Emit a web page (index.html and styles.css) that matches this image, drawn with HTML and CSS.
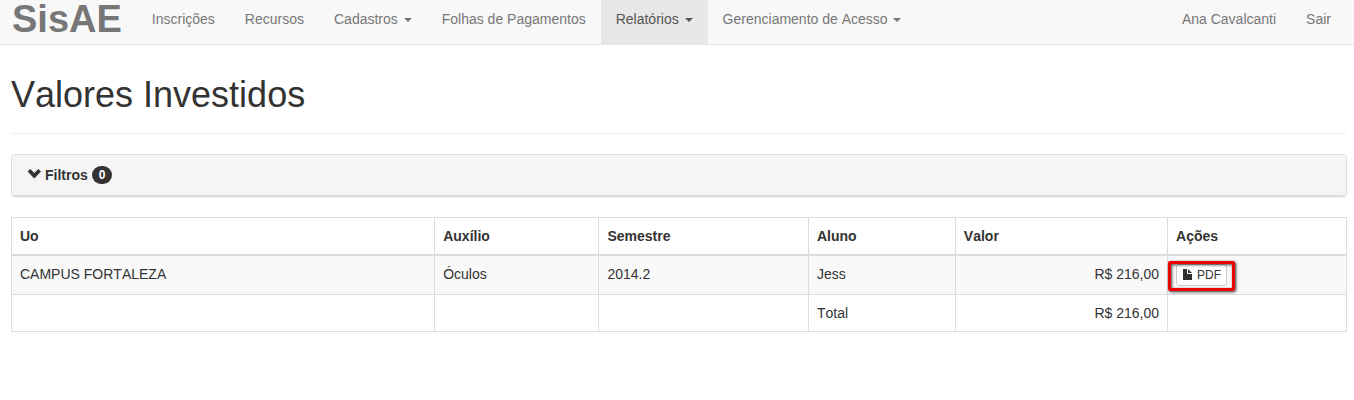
FILE: index.html
```html
<!DOCTYPE html>
<html lang="pt-BR">
<head>
  <meta charset="UTF-8" />
  <title>SisAE - Valores Investidos</title>
  <meta name="viewport" content="width=device-width, initial-scale=1.0" />
  <link rel="stylesheet" href="styles.css">
</head>
<body>
  <nav class="navbar">
    <a class="navbar-brand" href="#">SisAE</a>
    <ul class="nav">
      <li><a href="#">Inscrições</a></li>
      <li><a href="#">Recursos</a></li>
      <li><a href="#">Cadastros <span class="caret"></span></a></li>
      <li><a href="#">Folhas de Pagamentos</a></li>
      <li class="active"><a href="#">Relatórios <span class="caret"></span></a></li>
      <li><a href="#">Gerenciamento de Acesso <span class="caret"></span></a></li>
    </ul>
    <ul class="nav nav-right">
      <li><a href="#">Ana Cavalcanti</a></li>
      <li><a href="#">Sair</a></li>
    </ul>
  </nav>

  <main class="container">
    <div class="page-header">
      <h1>Valores Investidos</h1>
    </div>

    <!-- Filtros -->
    <div class="panel">
      <button class="panel-heading" type="button">
        <svg width="14" height="14" viewBox="0 0 14 14"><path d="M3.2 1 L7.3 5 L11.4 1 L14 3.6 L7.3 10.4 L0.6 3.6 Z" fill="#333"/></svg>
        <span>Filtros</span>
        <span class="badge">0</span>
      </button>
    </div>

    <!-- Resultado -->
    <table class="table">
      <thead>
        <tr>
          <th class="col-uo">Uo</th>
          <th class="col-auxilio">Auxílio</th>
          <th class="col-semestre">Semestre</th>
          <th class="col-aluno">Aluno</th>
          <th class="col-valor">Valor</th>
          <th>Ações</th>
        </tr>
      </thead>
      <tbody>
        <tr class="striped">
          <td>CAMPUS FORTALEZA</td>
          <td>Óculos</td>
          <td>2014.2</td>
          <td>Jess</td>
          <td class="text-right">R$ 216,00</td>
          <td>
            <div class="actions">
              <a class="btn" href="#">
                <svg width="12" height="12" viewBox="0 0 12 12"><path d="M1 0 H5 V5 H10 V11 H1 Z M6 0 L10 4 H6 Z" fill="#333"/></svg>
                PDF
              </a>
              <span class="highlight"></span>
            </div>
          </td>
        </tr>
        <tr>
          <td></td>
          <td></td>
          <td></td>
          <td>Total</td>
          <td class="text-right">R$ 216,00</td>
          <td></td>
        </tr>
      </tbody>
    </table>
  </main>
</body>
</html>
```
FILE: styles.css
```css
* {
  box-sizing: border-box;
}
body {
  margin: 0;
  font-family: "Liberation Sans", Arial, sans-serif;
  font-size: 14px;
  line-height: 20px;
  font-kerning: none;
  color: #333;
  background: #fff;
}
a {
  text-decoration: none;
}

/* navbar */
.navbar {
  display: flex;
  background: #f8f8f8;
  border-bottom: 1px solid #e7e7e7;
  padding: 0 8px 0 12px;
}
.navbar-brand {
  font-size: 38px;
  font-weight: bold;
  line-height: 38px;
  color: #777;
  margin-right: 15px;
}
.nav {
  display: flex;
  list-style: none;
  margin: 0;
  padding: 0;
}
.nav a {
  display: block;
  padding: 9px 15px 15px;
  color: #777;
}
.nav .active a {
  background: #e7e7e7;
  color: #555;
}
.nav-right {
  margin-left: auto;
}
.caret {
  display: inline-block;
  margin-left: 2px;
  vertical-align: middle;
  border-top: 4px solid;
  border-left: 4px solid transparent;
  border-right: 4px solid transparent;
}

/* conteudo */
.container {
  padding: 0 7px 0 11px;
}
.page-header {
  margin: 30px 0 20px;
  padding-bottom: 18px;
  border-bottom: 1px solid #eee;
}
h1 {
  margin: 0;
  font-size: 36px;
  font-weight: 500;
  line-height: 40px;
}
.panel {
  margin-bottom: 20px;
  border: 1px solid #ddd;
  border-radius: 4px;
  box-shadow: 0 1px 1px rgba(0, 0, 0, 0.05);
}
.panel-heading {
  display: flex;
  align-items: center;
  gap: 4px;
  width: 100%;
  padding: 10px 15px;
  border: 0;
  border-bottom: 1px solid #ddd;
  border-radius: 3px;
  background: #f5f5f5;
  font: inherit;
  font-weight: bold;
  color: #333;
  text-align: left;
}
.badge {
  padding: 3px 7px;
  border-radius: 10px;
  background: #333;
  color: #fff;
  font-size: 12px;
  line-height: 12px;
}

/* tabela */
.table {
  width: 100%;
  table-layout: fixed;
  border-collapse: collapse;
  border: 1px solid #ddd;
}
.table th,
.table td {
  padding: 8px;
  border: 1px solid #ddd;
  text-align: left;
  vertical-align: top;
}
.table th {
  border-bottom-width: 2px;
}
.striped {
  background: #f9f9f9;
}
.table .text-right {
  text-align: right;
}
.col-uo { width: 31.7%; }
.col-auxilio { width: 12.3%; }
.col-semestre { width: 15.7%; }
.col-aluno { width: 11%; }
.col-valor { width: 15.9%; }

.actions {
  position: relative;
  display: flex;
}
.btn {
  display: flex;
  align-items: center;
  gap: 3px;
  padding: 1px 5px;
  border: 1px solid #ccc;
  border-radius: 3px;
  background: #fff;
  color: #333;
  font-size: 12px;
  line-height: 18px;
}
.highlight {
  position: absolute;
  top: -3px;
  left: -8px;
  width: 67px;
  height: 30px;
  border: 3px solid #f00000;
  border-radius: 2px;
  box-shadow: 1px 1px 3px rgba(0, 0, 0, 0.8), inset 1px 1px 3px rgba(0, 0, 0, 0.7);
  pointer-events: none;
}
```
